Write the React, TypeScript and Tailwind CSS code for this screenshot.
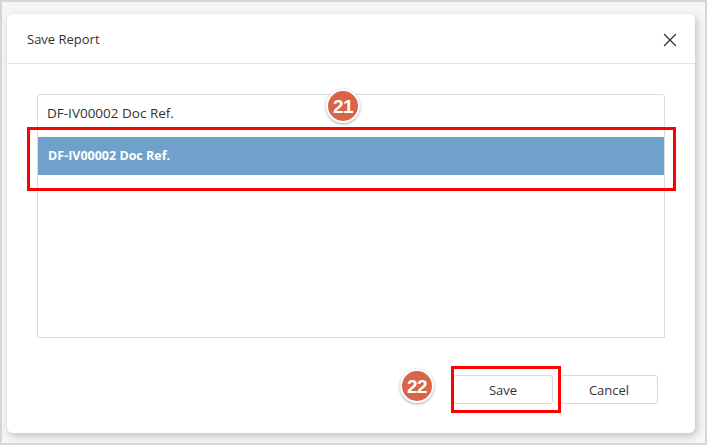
import { X } from "lucide-react";

function Badge({ n }: { n: number }) {
  return (
    <div className="flex h-[34px] w-[34px] items-center justify-center rounded-full border-2 border-white bg-[#d9644a] text-[19px] font-bold leading-none tracking-[-0.5px] text-white shadow-[0_1px_3px_rgba(0,0,0,0.35)] [font-family:'Liberation_Sans',Arial,sans-serif]">
      {n}
    </div>
  );
}

export default function App() {
  return (
    <div className="relative h-[445px] w-[707px] overflow-hidden border-2 border-[#d6d6d6] bg-[#f6f6f6] pl-[5px] pt-[12px] text-[#333] [font-family:'Open_Sans',sans-serif]">
      {/* Modal */}
      <div className="relative flex h-[419px] w-[688px] flex-col rounded-[6px] bg-white shadow-[2px_3px_8px_rgba(0,0,0,0.22)]">
        {/* Header */}
        <div className="flex h-[50px] items-center justify-between border-b border-[#e3e3e3] pl-[20px] pr-[14px]">
          <span className="pt-[2px] text-[13px] text-[#333]">Save Report</span>
          <X size={22} strokeWidth={1.4} className="mt-[2px] text-[#333]" />
        </div>

        {/* Body */}
        <div className="px-[30px] pt-[30px]">
          <div className="h-[244px] rounded-t-[3px] border border-[#dcdcdc]">
            <div className="flex h-[37px] items-center pl-[9px] text-[13.5px] text-[#333]">
              DF-IV00002 Doc Ref.
            </div>
            <div className="mt-[5px] flex h-[38px] items-center bg-[#6fa1ca] pl-[10px] text-[12.5px] font-bold text-white">
              DF-IV00002 Doc Ref.
            </div>
          </div>
        </div>

        {/* Footer */}
        <div className="mt-[37px] flex justify-end gap-[7px] pr-[37px]">
          <button className="h-[29px] w-[100px] rounded-[3px] border border-[#d8d8d8] bg-white pt-[2px] text-[13px] text-[#333]">
            Save
          </button>
          <button className="h-[29px] w-[98px] rounded-[3px] border border-[#d8d8d8] bg-white pt-[2px] text-[13px] text-[#333]">
            Cancel
          </button>
        </div>
      </div>

      {/* Annotations */}
      <div className="absolute left-[25px] top-[125px] h-[64px] w-[649px] border-[3px] border-[#ff0000]" />
      <div className="absolute left-[449px] top-[364px] h-[47px] w-[110px] border-[3px] border-[#ff0000]" />
      <div className="absolute left-[324px] top-[87px]">
        <Badge n={21} />
      </div>
      <div className="absolute left-[398px] top-[367px]">
        <Badge n={22} />
      </div>
    </div>
  );
}
